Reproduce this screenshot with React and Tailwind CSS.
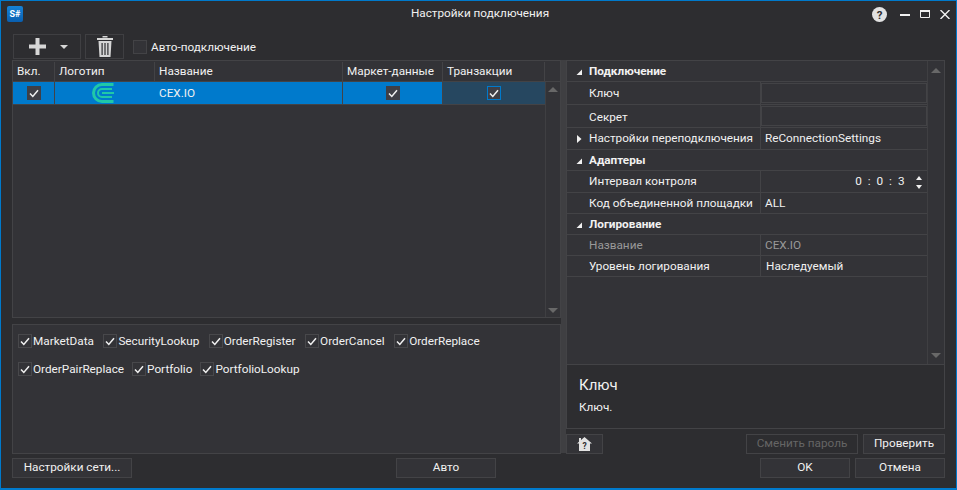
import React from "react";

const Tick = () => (
  <svg width="10" height="9" viewBox="0 0 10 9" fill="none" stroke="#f1f1f1" strokeWidth="1.5">
    <path d="M1 4.5L3.8 7.4L9 1.2" />
  </svg>
);

const Box = ({ focus }) => (
  <span className={`flex h-[14px] w-[14px] items-center justify-center bg-[#3f3f46] ${focus ? "border border-[#007acc]" : ""}`}>
    <Tick />
  </span>
);

const Opt = ({ label }) => (
  <label className="flex items-center">
    <span className="flex h-[14px] w-[14px] items-center justify-center border border-[#48484b]">
      <Tick />
    </span>
    <span className="ml-[1px] pt-[1px]">{label}</span>
  </label>
);

const Tri = () => (
  <svg width="8" height="8" viewBox="0 0 8 8" className="ml-[8px] shrink-0 text-[#f1f1f1]">
    <path d="M7 1.5V7H1.5Z" fill="currentColor" />
  </svg>
);

const Group = ({ label }) => (
  <div className="flex h-[21px] items-center border-b border-[#434346] pt-[1px] font-bold">
    <Tri />
    <span className="ml-[6px]">{label}</span>
  </div>
);

const Prop = ({ name, h = "h-[21px]", dim, expand, children }) => (
  <div className={`flex ${h} border-b border-[#434346] ${dim ? "text-[#999]" : ""}`}>
    <div className="flex w-[194px] shrink-0 items-center whitespace-nowrap border-r border-[#434346] pl-[22px] pt-[1px]">
      {expand && (
        <svg width="6" height="8" viewBox="0 0 6 8" className="-ml-[13px] mr-[7px]">
          <path d="M1 0L5.5 4L1 8Z" fill="#f1f1f1" />
        </svg>
      )}
      {name}
    </div>
    <div className="flex min-w-0 flex-1 items-center pl-[4px] pt-[1px]">{children}</div>
  </div>
);

const Field = () => <span className="-mt-[1px] -ml-[4px] h-[20px] w-[167px] border border-[#434346]" />;

const Btn = ({ className = "", children, dim }) => (
  <button className={`flex h-[20px] items-center justify-center border border-[#434346] bg-[#333337] ${dim ? "!bg-transparent border-[#3a3a3d] text-[#656565]" : ""} ${className}`}>
    {children}
  </button>
);

const Up = () => (
  <svg width="10" height="5" viewBox="0 0 10 5"><path d="M5 0L10 5H0Z" fill="#686868" /></svg>
);
const Down = () => (
  <svg width="10" height="5" viewBox="0 0 10 5"><path d="M5 5L10 0H0Z" fill="#686868" /></svg>
);

export default function App() {
  return (
    <div className="flex h-[490px] w-[957px] flex-col overflow-hidden border border-b-2 border-[#007acc] bg-[#2d2d30] font-['Roboto',sans-serif] text-[11.75px] leading-none text-[#f1f1f1]">
      {/* title */}
      <div className="flex h-[30px] shrink-0 items-center px-[6px] pb-[4px]">
        <div className="w-[120px]">
          <div className="flex h-[16px] w-[16px] items-center justify-center rounded-[2px] bg-gradient-to-b from-[#1583d8] to-[#0a5fb0] text-[9px] font-bold text-white">S#</div>
        </div>
        <div className="flex-1 pl-[3px] text-center">Настройки подключения</div>
        <div className="flex w-[120px] items-center justify-end gap-[10px]">
          <svg width="15" height="15" viewBox="0 0 15 15" className="mr-[3px]">
            <circle cx="7.5" cy="7.5" r="7.5" fill="#e2e2e2" />
            <text x="7.5" y="11.5" textAnchor="middle" fontSize="11.5" fontWeight="700" fill="#2d2d30">?</text>
          </svg>
          <svg width="10" height="10" viewBox="0 0 10 10"><path d="M0 5h10v2H0z" fill="#f1f1f1" /></svg>
          <svg width="10" height="8" viewBox="0 0 10 8"><path d="M0.5 1.5h9v6h-9z" fill="none" stroke="#f1f1f1" /><path d="M0 0h10v2H0z" fill="#f1f1f1" /></svg>
          <svg width="10" height="9" viewBox="0 0 10 9"><path d="M0.5 0L9.5 9M9.5 0L0.5 9" stroke="#f1f1f1" strokeWidth="1.4" /></svg>
        </div>
      </div>

      {/* body */}
      <div className="flex h-[423px] shrink-0 px-[11px]">
        {/* left */}
        <div className="flex w-[549px] shrink-0 flex-col">
          <div className="ml-[1px] flex h-[29px] shrink-0 items-start pt-[3px]">
            <div className="flex h-[25px] w-[68px] items-center border border-[#3f3f42] pl-[15px]">
              <svg width="17" height="17" viewBox="0 0 17 17"><path d="M6.5 0h4v6.5H17v4h-6.5V17h-4v-6.5H0v-4h6.5z" fill="#d6d6d6" /></svg>
              <svg width="8" height="4" viewBox="0 0 8 4" className="ml-[14px]"><path d="M0 0h8L4 4z" fill="#d6d6d6" /></svg>
            </div>
            <div className="ml-[4px] flex h-[25px] w-[39px] items-center justify-center border border-[#3f3f42]">
              <svg width="16" height="21" viewBox="0 0 16 21">
                <path d="M5.5 1.5h5V0h-5zM0 2h16v2H0z" fill="#d6d6d6" />
                <path d="M1.5 5h13l-1 16h-11zM4.5 7v12h1.2V7zM7.4 7v12h1.2V7zM10.3 7v12h1.2V7z" fill="#d6d6d6" fillRule="evenodd" />
              </svg>
            </div>
            <div className="ml-[9px] flex h-[25px] items-center">
              <span className="h-[14px] w-[14px] border border-[#434346] bg-[#333337]" />
              <span className="ml-[4px] pt-[2px]">Авто-подключение</span>
            </div>
          </div>

          {/* grid */}
          <div className="flex h-[258px] shrink-0 flex-col border border-[#434346] bg-[#333337]">
            <div className="flex h-[21px] shrink-0 border-b border-[#434346] pt-[1px]">
              <div className="flex w-[42px] items-center border-r border-[#434346] pl-[4px]">Вкл.</div>
              <div className="flex w-[100px] items-center border-r border-[#434346] pl-[4px]">Логотип</div>
              <div className="flex w-[188px] items-center border-r border-[#434346] pl-[4px]">Название</div>
              <div className="flex w-[100px] items-center border-r border-[#434346] pl-[4px]">Маркет-данные</div>
              <div className="flex w-[102px] items-center border-r border-[#434346] pl-[4px]">Транзакции</div>
              <div className="flex-1" />
            </div>
            <div className="flex min-h-0 flex-1">
              <div className="flex-1">
                <div className="flex h-[23px] border-b border-[#434346]">
                  <div className="flex w-[42px] items-center justify-center border-r border-[#434346] bg-[#007acc]"><Box /></div>
                  <div className="flex w-[100px] items-center justify-center border-r border-[#007acc] bg-[#007acc]">
                    <svg width="22" height="20" viewBox="0 0 22 20" fill="none" stroke="#20c8a8" className="mr-[3px]">
                      <path d="M21.5 1.5H10A8.5 8.5 0 0 0 10 18.5H21.5" strokeWidth="3" />
                      <path d="M20 6H10A4 4 0 0 0 10 14H20" strokeWidth="2" />
                      <path d="M10 10H22" strokeWidth="2" />
                    </svg>
                  </div>
                  <div className="flex w-[188px] items-center border-r border-[#434346] bg-[#007acc] pl-[4px] pt-[1px]">CEX.IO</div>
                  <div className="flex w-[100px] items-center justify-center border-r border-[#434346] bg-[#007acc]"><Box /></div>
                  <div className="flex w-[102px] items-center justify-center bg-[#264760]"><Box focus /></div>
                </div>
              </div>
              <div className="flex w-[17px] flex-col items-center justify-between border-l border-[#3f3f42] pb-[4px] pt-[5px]">
                <Up />
                <Down />
              </div>
            </div>
          </div>

          {/* splitter */}
          <div className="h-[6px] shrink-0" />

          {/* options */}
          <div className="flex h-[130px] shrink-0 flex-col gap-[14px] border border-[#434346] bg-[#333337] px-[5px] pt-[9px]">
            <div className="flex gap-x-[9.5px]">
              {["MarketData", "SecurityLookup", "OrderRegister", "OrderCancel", "OrderReplace"].map((o) => (
                <Opt key={o} label={o} />
              ))}
            </div>
            <div className="flex gap-x-[8px]">
              {["OrderPairReplace", "Portfolio", "PortfolioLookup"].map((o) => (
                <Opt key={o} label={o} />
              ))}
            </div>
          </div>
        </div>

        {/* splitter */}
        <div className="mt-[29px] h-[393px] w-[5px] shrink-0 bg-[#3f3f42]" />

        {/* right */}
        <div className="flex min-w-0 flex-1 flex-col pt-[29px]">
          <div className="flex h-[305px] shrink-0 border border-[#434346] bg-[#333337]">
            <div className="min-w-0 flex-1">
              <Group label="Подключение" />
              <Prop name="Ключ" h="h-[23px]"><Field /></Prop>
              <Prop name={<span className="pt-[2px]">Секрет</span>} h="h-[23px]"><Field /></Prop>
              <Prop name="Настройки переподключения" h="h-[22px]" expand>ReConnectionSettings</Prop>
              <Group label="Адаптеры" />
              <Prop name="Интервал контроля" h="h-[22px]">
                <div className="flex flex-1 items-center justify-end">
                  <span className="tracking-[1.5px]">0 : 0 : 3</span>
                  <div className="ml-[4px] flex w-[17px] flex-col items-center gap-[5px]">
                    <svg width="6" height="4" viewBox="0 0 6 4"><path d="M3 0l3 4H0z" fill="#f1f1f1" /></svg>
                    <svg width="6" height="4" viewBox="0 0 6 4"><path d="M3 4l3-4H0z" fill="#f1f1f1" /></svg>
                  </div>
                </div>
              </Prop>
              <Prop name="Код объединенной площадки">ALL</Prop>
              <Group label="Логирование" />
              <Prop name="Название" dim>CEX.IO</Prop>
              <Prop name="Уровень логирования"><span className="ml-[1px]">Наследуемый</span></Prop>
            </div>
            <div className="flex w-[17px] flex-col items-center justify-between border-l border-[#3f3f42] pb-[6px] pt-[7px]">
              <Up />
              <Down />
            </div>
          </div>
          <div className="h-[64px] shrink-0 border-x border-b border-[#434346] px-[12px] pt-[13px]">
            <div className="text-[15px]">Ключ</div>
            <div className="mt-[9px]">Ключ.</div>
          </div>
          <div className="mt-[5px] flex items-start">
            <Btn className="w-[37px]">
              <svg width="15" height="14" viewBox="0 0 15 14">
                <path d="M7.5 0L15 6.5H13V14H2V6.5H0L2 4.8V1h2v2.1z" fill="#e2e2e2" />
                <text x="7.5" y="12" textAnchor="middle" fontSize="8.5" fontWeight="700" fill="#2d2d30">?</text>
              </svg>
            </Btn>
            <Btn dim className="ml-auto w-[112px]">Сменить пароль</Btn>
            <Btn className="ml-[5px] w-[82px]">Проверить</Btn>
          </div>
        </div>
      </div>

      {/* footer */}
      <div className="mt-[4px] flex items-start px-[11px]">
        <Btn className="w-[120px]">Настройки сети...</Btn>
        <Btn className="ml-[264px] w-[100px]">Авто</Btn>
        <Btn className="ml-auto w-[90px]">OK</Btn>
        <Btn className="ml-[5px] w-[90px]">Отмена</Btn>
      </div>
    </div>
  );
}
